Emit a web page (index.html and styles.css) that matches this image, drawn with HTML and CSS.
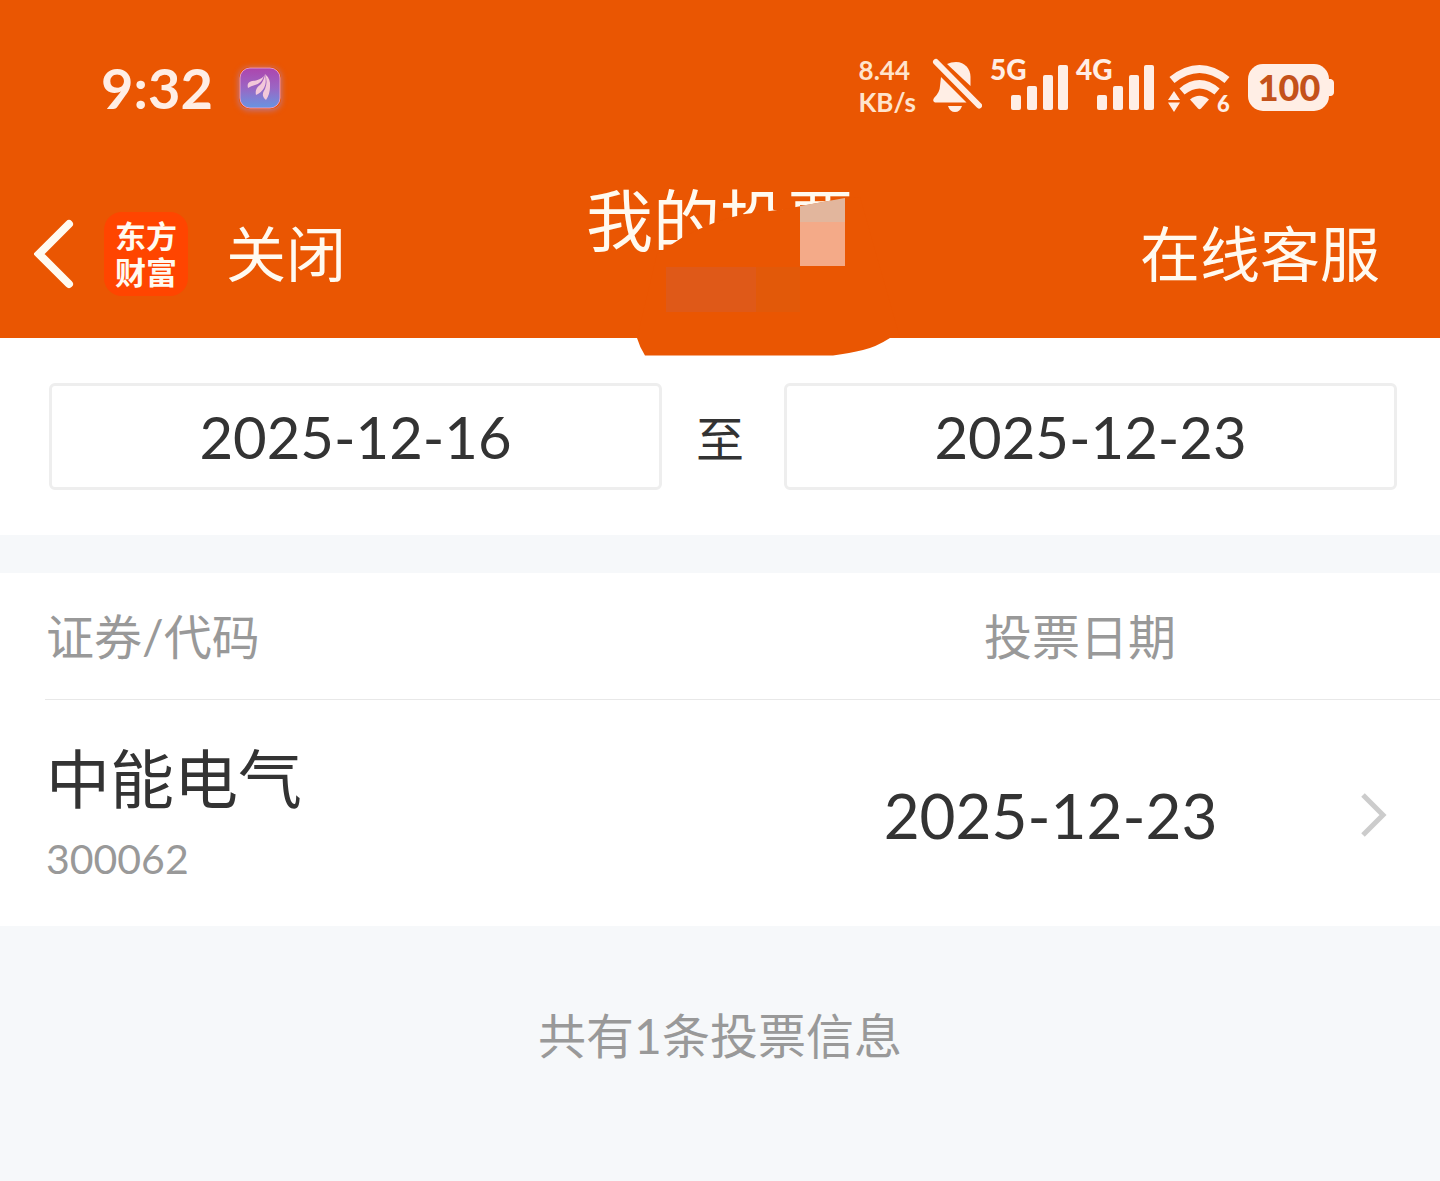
FILE: index.html
```html
<!DOCTYPE html>
<html lang="zh-CN">
  <head>
    <meta charset="UTF-8" />
    <meta name="viewport" content="width=device-width, initial-scale=1.0" />
    <title>我的投票</title>
    <link rel="stylesheet" href="styles.css">
  </head>
  <body>
    <header class="header">
      <!-- Status bar -->
      <div class="status-bar">
        <div class="status-left">
          <span class="time">9:32</span>
          <svg class="app-badge" width="42" height="42" viewBox="0 0 42 42">
            <defs>
              <linearGradient id="badgeFill" x1="0" y1="0" x2="0" y2="1">
                <stop offset="0" stop-color="#ad45ad" />
                <stop offset="0.5" stop-color="#9a66c4" />
                <stop offset="1" stop-color="#6795e2" />
              </linearGradient>
            </defs>
            <rect x="1" y="1" width="40" height="40" rx="10" fill="url(#badgeFill)" stroke="#e59ac8" />
            <path d="M9 21C8 17 9 15 13 14Q20 14 25 9Q22 17 16 18Q12 19 9 21Z" fill="#f2c8da" />
            <path d="M17 28C16 23 18 20 21 18Q25 14 26 7Q28 16 25 21Q22 26 17 28Z" fill="#f2c8da" />
            <path d="M27 33C22 29 24 25 26 22Q29 15 26 7Q32 12 31 20Q31 27 27 33Z" fill="#f2c8da" />
          </svg>
        </div>
        <div class="status-right">
          <div class="net-speed"><span>8.44</span><span>KB/s</span></div>
          <svg class="bell" width="50" height="60" viewBox="0 0 50 60" fill="currentColor">
            <path d="M15 6Q19 4 24 4C33 4 38.500 11 38.500 19V28Z" />
            <path d="M9 19L34.500 44.500H3Q0 43 2 40Q8 34 8 28Z" />
            <path d="M16 48H30Q28 54 23 54Q18 54 16 48Z" />
            <path d="M4 4L47 47.500" stroke="#ea5602" stroke-width="12" />
            <path d="M4 4L47 47.500" stroke="currentColor" stroke-width="6" stroke-linecap="round" />
          </svg>
          <div class="signal">
            <span class="signal-type">5G</span>
            <svg width="78" height="60" viewBox="0 0 78 60" fill="currentColor">
              <rect x="21" y="37" width="10" height="15" rx="2" />
              <rect x="37" y="28" width="10" height="24" rx="2" />
              <rect x="53" y="17" width="10" height="35" rx="2" />
              <rect x="68" y="7" width="10" height="45" rx="2" />
            </svg>
          </div>
          <div class="signal">
            <span class="signal-type">4G</span>
            <svg width="78" height="60" viewBox="0 0 78 60" fill="currentColor">
              <rect x="21" y="37" width="10" height="15" rx="2" />
              <rect x="37" y="28" width="10" height="24" rx="2" />
              <rect x="53" y="17" width="10" height="35" rx="2" />
              <rect x="68" y="7" width="10" height="45" rx="2" />
            </svg>
          </div>
          <svg class="wifi" width="63" height="60" viewBox="0 0 63 60" fill="currentColor">
            <path d="M4 22Q31.500 0 59 22" fill="none" stroke="currentColor" stroke-width="8" />
            <path d="M14 33.500Q31.500 19 49 33.500" fill="none" stroke="currentColor" stroke-width="8" />
            <path d="M22 41.500Q31.500 34 41 41.500L33 50.500Q31.500 52 30 50.500Z" />
            <path d="M6 33L12 42H0ZM0 44.500H12L6 54Z" />
            <text class="wifi-gen" x="49" y="54">6</text>
          </svg>
          <svg class="battery" width="86" height="60" viewBox="0 0 86 60" fill="currentColor">
            <rect x="0" y="6" width="81" height="47" rx="15" />
            <path d="M80 21H83Q86 22 86 25V34Q86 37 83 38H80Z" />
            <text class="battery-level" x="41" y="43" text-anchor="middle">100</text>
          </svg>
        </div>
      </div>

      <!-- Navigation -->
      <nav class="nav">
        <div class="nav-left">
          <button class="back" type="button" aria-label="返回">
            <svg width="40" height="70" viewBox="0 0 40 70" fill="none" stroke="#fffaf0" stroke-width="8" stroke-linecap="round">
              <path d="M35 5L5 35L35 65" />
            </svg>
          </button>
          <div class="logo"><span>东方</span><span>财富</span></div>
          <button class="close" type="button">关闭</button>
        </div>
        <h1 class="title">我的投票</h1>
        <a class="service" href="#">在线客服</a>
      </nav>

      <!-- Covers the account line under the title -->
      <svg class="cover" width="280" height="170" viewBox="0 0 280 170">
        <path d="M37 66L63 49Q95 32 125 26L165 21L225 10L240 9L280 150H270Q256 159 243 162T213 167.500H25Q20 160 17 150Z" fill="#ea5602" />
        <path d="M180 18L225 10V34H180Z" fill="#e2b69d" />
        <path d="M180 34H225V78H180Z" fill="#f4aa88" />
        <path d="M46 79H136V124H46Z" fill="#df5918" />
        <path d="M136 79H180V124H136Z" fill="#e25909" />
      </svg>
    </header>

    <main>
      <form class="date-range">
        <input class="date-input" type="text" value="2025-12-16" aria-label="开始日期" readonly />
        <span class="to">至</span>
        <input class="date-input" type="text" value="2025-12-23" aria-label="结束日期" readonly />
      </form>

      <section class="votes">
        <table class="vote-table">
          <thead>
            <tr>
              <th class="col-stock">证券/代码</th>
              <th class="col-date">投票日期</th>
            </tr>
          </thead>
          <tbody>
            <tr>
              <td class="col-stock">
                <div class="stock-name">中能电气</div>
                <div class="stock-code">300062</div>
              </td>
              <td class="col-date">
                <a class="vote-link" href="#">
                  <span class="vote-date">2025-12-23</span>
                  <svg width="26" height="44" viewBox="0 0 26 44" fill="none" stroke="#cccccc" stroke-width="5">
                    <path d="M2 2L22 22L2 42" />
                  </svg>
                </a>
              </td>
            </tr>
          </tbody>
        </table>
      </section>

      <p class="summary">共有1条投票信息</p>
    </main>
  </body>
</html>
```
FILE: styles.css
```css
* {
  margin: 0;
  padding: 0;
  box-sizing: border-box;
}

body {
  min-height: 100vh;
  background: #f6f8fa;
  color: #333333;
  font-family: Lato, "Noto Sans CJK SC", sans-serif;
}

button,
input {
  border: none;
  background: none;
  color: inherit;
  font-family: inherit;
}

a {
  color: inherit;
  text-decoration: none;
}

svg {
  display: block;
  flex: none;
}

/* Header */
.header {
  position: relative;
  padding-bottom: 6px;
  background: #ea5602;
  color: #fffaf0;
}

.status-bar {
  display: flex;
  align-items: center;
  justify-content: space-between;
  height: 176px;
  padding: 0 106px 0 101px;
  color: #ffeee5;
}

.status-left,
.status-right {
  display: flex;
  align-items: center;
}

.status-left {
  gap: 26px;
}

.time {
  font-size: 56px;
  font-weight: 700;
  line-height: 64px;
}

.app-badge {
  border-radius: 10px;
  box-shadow: 0 1px 6px #b87a9c;
}

.net-speed {
  display: flex;
  flex-direction: column;
  padding-bottom: 4px;
  font-size: 26px;
  font-weight: 700;
  line-height: 32px;
  color: #ffe3cc;
}

.bell {
  margin-left: 16px;
}

.signal {
  position: relative;
  margin-left: 8px;
}

.signal-type {
  position: absolute;
  top: -5px;
  left: 0;
  font-size: 28px;
  font-weight: 900;
  line-height: 32px;
}

.wifi {
  margin-left: 14px;
}

.wifi-gen {
  font-size: 22px;
  font-weight: 900;
}

.battery {
  margin-left: 17px;
}

.battery-level {
  fill: #c4521a;
  font-size: 36px;
  font-weight: 900;
}

/* Navigation */
.nav {
  display: grid;
  grid-template-columns: 1fr auto 1fr;
  align-items: center;
  height: 156px;
  padding: 0 34px;
}

.nav-left {
  display: flex;
  align-items: center;
}

.logo {
  display: flex;
  flex-direction: column;
  align-items: center;
  margin: 0 38px 0 30px;
  padding: 6px 11px;
  border-radius: 18px;
  background: #ff4500;
  font-size: 31px;
  font-weight: 700;
  line-height: 36px;
}

.close,
.service {
  font-size: 60px;
  line-height: 80px;
}

.title {
  padding-bottom: 68px;
  font-size: 67px;
  font-weight: 400;
  line-height: 80px;
}

.service {
  justify-self: end;
  padding-right: 26px;
}

.cover {
  position: absolute;
  bottom: -20px;
  left: calc(50% - 100px);
}

/* Date range */
.date-range {
  display: flex;
  align-items: center;
  padding: 45px 43px 45px 49px;
  background: #ffffff;
}

.date-input {
  flex: 1;
  min-width: 0;
  height: 107px;
  border: 3px solid #eeeeee;
  border-radius: 6px;
  font-size: 58px;
  text-align: center;
}

.to {
  padding: 4px 40px 0 34px;
  font-size: 48px;
  line-height: 72px;
}

/* Vote list */
.votes {
  margin-top: 38px;
  padding-left: 45px;
  background: #ffffff;
}

.vote-table {
  width: 100%;
  border-collapse: collapse;
}

.vote-table th {
  height: 126px;
  padding-top: 2px;
  border-bottom: 1px solid #e8e8e8;
  color: #999999;
  font-size: 48px;
  font-weight: 400;
  line-height: 72px;
}

.vote-table td {
  height: 227px;
  padding-top: 4px;
}

.vote-table .col-stock {
  padding-left: 1px;
  text-align: left;
}

.col-date {
  width: 50vw;
  text-align: center;
}

.stock-name {
  font-size: 64px;
  line-height: 88px;
}

.stock-code {
  color: #999999;
  font-size: 41px;
  line-height: 72px;
}

.vote-link {
  display: flex;
  align-items: center;
  padding: 0 53px 0 20px;
}

.vote-date {
  flex: 1;
  font-size: 62px;
  line-height: 72px;
}

.summary {
  padding: 74px 0 72px;
  color: #999999;
  font-size: 48px;
  line-height: 72px;
  text-align: center;
}
```
